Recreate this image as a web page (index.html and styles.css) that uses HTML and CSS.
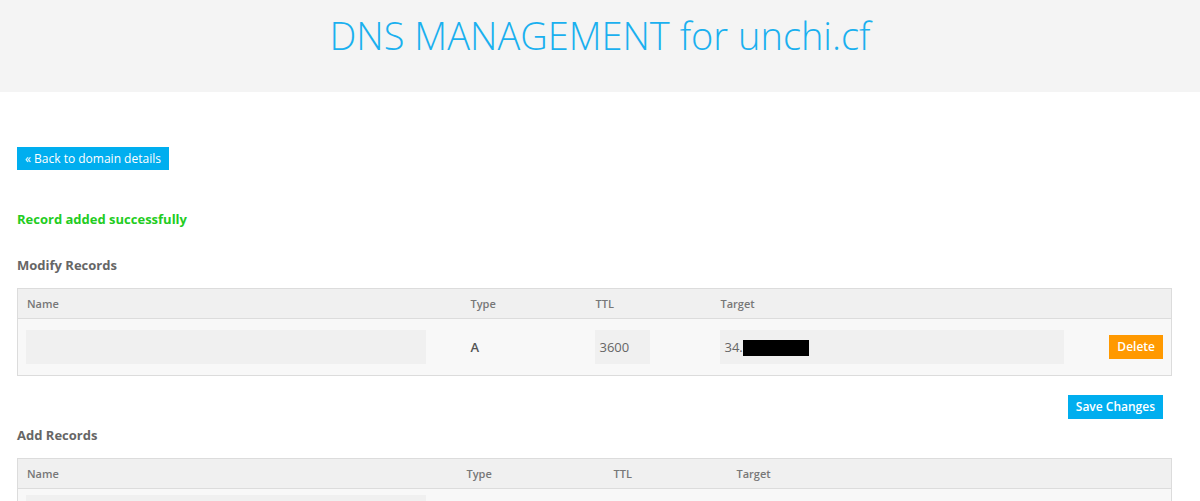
FILE: index.html
```html
<!DOCTYPE html>
<html lang="en">
<head>
    <meta charset="UTF-8">
    <title>DNS Management</title>
    <link rel="stylesheet" href="styles.css">
</head>
<body>
    <div class="header">
        <h1>DNS MANAGEMENT for unchi.cf</h1>
    </div>

    <div class="container">
        <a href="#" class="btn back-btn">&laquo; Back to domain details</a>

        <p class="success">Record added successfully</p>

        <h2>Modify Records</h2>
        <table class="records modify">
            <colgroup>
                <col style="width: 444px">
                <col style="width: 125px">
                <col style="width: 125px">
                <col style="width: 360px">
                <col>
            </colgroup>
            <thead>
                <tr>
                    <th>Name</th>
                    <th>Type</th>
                    <th>TTL</th>
                    <th>Target</th>
                    <th></th>
                </tr>
            </thead>
            <tbody>
                <tr>
                    <td><div class="field name-field"></div></td>
                    <td class="type">A</td>
                    <td><div class="field ttl-field">3600</div></td>
                    <td><div class="field target-field">34.<span class="redact"></span></div></td>
                    <td class="action"><a href="#" class="btn delete-btn">Delete</a></td>
                </tr>
            </tbody>
        </table>

        <div class="save-row">
            <a href="#" class="btn save-btn">Save Changes</a>
        </div>

        <h2 class="add-title">Add Records</h2>
        <table class="records add">
            <colgroup>
                <col style="width: 440px">
                <col style="width: 147px">
                <col style="width: 123px">
                <col>
            </colgroup>
            <thead>
                <tr>
                    <th>Name</th>
                    <th>Type</th>
                    <th>TTL</th>
                    <th>Target</th>
                </tr>
            </thead>
            <tbody>
                <tr>
                    <td><div class="field name-field"></div></td>
                    <td></td>
                    <td></td>
                    <td></td>
                </tr>
            </tbody>
        </table>
    </div>
</body>
</html>
```

FILE: styles.css
```css
* {
    margin: 0;
    padding: 0;
    box-sizing: border-box;
}

body {
    font-family: 'Open Sans', 'Noto Sans', sans-serif;
    background: white;
    color: #555;
    font-size: 13px;
}

.header {
    background: #f4f4f4;
    height: 92px;
    text-align: center;
}

.header h1 {
    font-weight: 300;
    font-size: 38px;
    color: #1ab0ef;
    line-height: 1;
    padding-top: 16px;
}

.container {
    padding: 55px 28px 0 17px;
}

.btn {
    display: inline-block;
    color: white;
    text-decoration: none;
    font-size: 12px;
    line-height: 23px;
    padding: 0 8px;
}

.back-btn {
    background: #00aeef;
}

.success {
    color: #22cc22;
    font-weight: bold;
    margin-top: 39px;
    line-height: 20px;
}

h2 {
    font-size: 13px;
    font-weight: bold;
    color: #666;
    line-height: 20px;
    margin-top: 26px;
}

h2.add-title {
    margin-top: 6px;
}

.records {
    width: 1155px;
    table-layout: fixed;
    border-collapse: collapse;
    border: 1px solid #dcdcdc;
    margin-top: 13px;
}

.records th {
    background: #f0f0f0;
    border-bottom: 1px solid #dcdcdc;
    text-align: left;
    font-size: 11px;
    font-weight: 600;
    color: #777;
    height: 30px;
    padding: 0 9px;
}

.records td {
    background: #f8f8f8;
    height: 57px;
    padding: 0 8px;
}

.records td.type {
    padding-left: 9px;
    font-weight: 600;
    color: #555;
}

.field {
    background: #f0f0f0;
    height: 34px;
    line-height: 34px;
    color: #666;
    padding: 0 5px;
}

.name-field {
    width: 400px;
}

.ttl-field {
    width: 55px;
}

.target-field {
    width: 344px;
}

.redact {
    display: inline-block;
    width: 66px;
    height: 16px;
    background: black;
    vertical-align: middle;
    margin-top: -2px;
}

.action {
    text-align: right;
}

.delete-btn {
    background: #ff9900;
    font-weight: 600;
    line-height: 24px;
}

.save-row {
    width: 1155px;
    text-align: right;
    padding-right: 9px;
    margin-top: 19px;
}

.save-btn {
    background: #00aeef;
    font-weight: 600;
    line-height: 24px;
}

.records.add td {
    height: 40px;
}

.add .name-field {
    margin-top: 6px;
}
```
